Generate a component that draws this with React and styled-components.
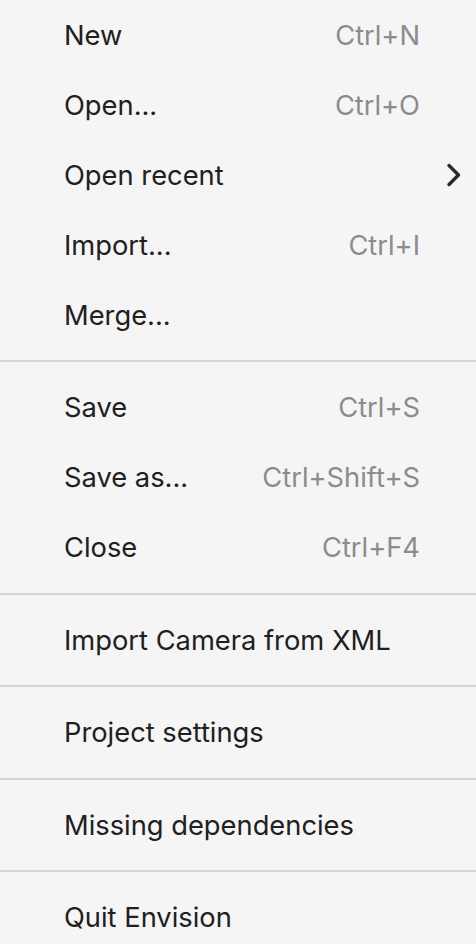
import styled, { createGlobalStyle } from "styled-components";

const sections = [
  [
    { label: "New", shortcut: "Ctrl+N" },
    { label: "Open...", shortcut: "Ctrl+O" },
    { label: "Open recent", submenu: true },
    { label: "Import...", shortcut: "Ctrl+I" },
    { label: "Merge..." },
  ],
  [
    { label: "Save", shortcut: "Ctrl+S" },
    { label: "Save as...", shortcut: "Ctrl+Shift+S" },
    { label: "Close", shortcut: "Ctrl+F4" },
  ],
  [{ label: "Import Camera from XML" }],
  [{ label: "Project settings" }],
  [{ label: "Missing dependencies" }],
  [{ label: "Quit Envision" }],
];

export default function App() {
  return (
    <>
      <GlobalStyle />
      <Menu>
        {sections.map((items, i) => (
          <Section key={i}>
            {i > 0 && <Separator />}
            {items.map((item) => (
              <Item key={item.label}>
                <Label>{item.label}</Label>
                {item.shortcut && <Shortcut>{item.shortcut}</Shortcut>}
                {item.submenu && (
                  <Chevron viewBox="0 0 16 24" width="16" height="24">
                    <polyline
                      points="3,2.5 12.5,12 3,21.5"
                      fill="none"
                      stroke="#2a2a2a"
                      strokeWidth="3.4"
                      strokeLinecap="round"
                      strokeLinejoin="round"
                    />
                  </Chevron>
                )}
              </Item>
            ))}
          </Section>
        ))}
      </Menu>
    </>
  );
}

const GlobalStyle = createGlobalStyle`
  html, body {
    margin: 0;
    padding: 0;
    background-color: #f5f5f5;
  }
`;

const Menu = styled.div`
  display: flex;
  flex-direction: column;
  width: 476px;
  min-height: 944px;
  overflow: hidden;
  background-color: #f5f5f5;
  font-family: Inter, "Noto Sans", sans-serif;
`;

const Section = styled.div`
  display: flex;
  flex-direction: column;
`;

const Separator = styled.div`
  height: 2px;
  background-color: #d5d5d5;
  margin: 10px 0 10.5px;
`;

const Item = styled.div`
  display: flex;
  align-items: center;
  justify-content: space-between;
  height: 70px;
  padding: 0 14px 0 64px;
`;

const Label = styled.span`
  font-size: 27.3px;
  color: #202020;
`;

const Shortcut = styled.span`
  font-size: 27.3px;
  color: #8c8c8c;
  padding-right: 42px;
`;

const Chevron = styled.svg`
  display: block;
`;
